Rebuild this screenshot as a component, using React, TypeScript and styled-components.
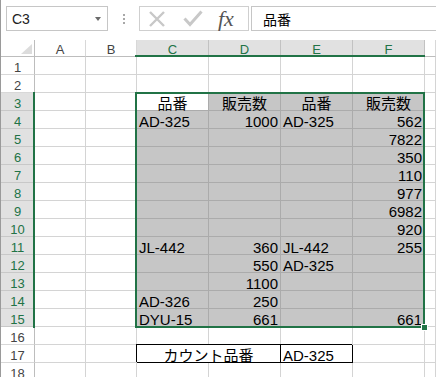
import React from 'react';
import styled, { createGlobalStyle } from 'styled-components';

const GlobalStyle = createGlobalStyle`
  html, body { margin: 0; padding: 0; background: #fff; }
  body { font-family: "Liberation Sans", "Noto Sans CJK JP", sans-serif; }
`;

const GREEN = '#217346';

const Window = styled.div`
  width: 436px;
  height: 377px;
  overflow: hidden;
  box-sizing: border-box;
  border-left: 1px solid #9a9a9a;
  background: #fff;
`;

const FormulaBar = styled.div`
  display: flex;
  align-items: flex-start;
  height: 40px;
  box-sizing: border-box;
  padding: 6px 0 0 5px;
`;

const NameBox = styled.div`
  width: 102px;
  height: 25px;
  box-sizing: border-box;
  border: 1px solid #c6c6c6;
  display: flex;
  align-items: center;
  justify-content: space-between;
  padding: 0 6px 0 5px;
  font-size: 14px;
  color: #222;
`;

const DropArrow = styled.span`
  width: 0;
  height: 0;
  border-left: 3.5px solid transparent;
  border-right: 3.5px solid transparent;
  border-top: 4px solid #6b6b6b;
`;

const Splitter = styled.div`
  width: 31px;
  height: 25px;
  display: flex;
  flex-direction: column;
  align-items: center;
  justify-content: center;
  gap: 2px;
`;

const Dot = styled.span`
  width: 2px;
  height: 2px;
  background: #a8a8a8;
`;

const ActionGroup = styled.div`
  width: 110px;
  height: 25px;
  box-sizing: border-box;
  border: 1px solid #cfcfcf;
  display: flex;
  align-items: center;
  padding-left: 8px;
`;

const IconSlot = styled.span<{ $ml: number }>`
  display: flex;
  margin-left: ${(p) => p.$ml}px;
`;

const Fx = styled.span`
  margin-left: 15px;
  font-family: "Liberation Serif", serif;
  font-style: italic;
  font-size: 22px;
  line-height: 1;
  color: #555;
  margin-top: 1px;
`;

const FormulaInput = styled.div`
  flex: 1;
  margin-left: 2px;
  height: 25px;
  box-sizing: border-box;
  border: 1px solid #c6c6c6;
  border-right: none;
  display: flex;
  align-items: center;
  padding-left: 11px;
  font-size: 14px;
  color: #000;
`;

const Sheet = styled.div`
  position: relative;
  display: grid;
  grid-template-columns: 34px 51px 51px 72px 72px 72px 72px 1fr;
  grid-template-rows: 17px repeat(18, 18px);
`;

const Corner = styled.div`
  box-sizing: border-box;
  border-right: 1px solid #bdbdbd;
  border-bottom: 1px solid #bdbdbd;
  position: relative;
  &::after {
    content: '';
    position: absolute;
    right: 2px;
    bottom: 2px;
    width: 0;
    height: 0;
    border-left: 11px solid transparent;
    border-bottom: 10px solid #dcdcdc;
  }
`;

const ColHeader = styled.div<{ $active?: boolean }>`
  box-sizing: border-box;
  border-right: 1px solid ${(p) => (p.$active ? '#c2c2c2' : '#d8d8d8')};
  border-bottom: 1px solid #bdbdbd;
  background: ${(p) => (p.$active ? '#e1e1e1' : '#fff')};
  color: ${(p) => (p.$active ? GREEN : '#444')};
  font-size: 13px;
  text-align: center;
  line-height: 13px;
  padding-top: 3px;
`;

const RowHeader = styled.div<{ $active?: boolean }>`
  box-sizing: border-box;
  border-right: 1px solid #bdbdbd;
  border-bottom: 1px solid ${(p) => (p.$active ? '#c8c8c8' : '#d8d8d8')};
  background: ${(p) => (p.$active ? '#e1e1e1' : '#fff')};
  color: ${(p) => (p.$active ? GREEN : '#444')};
  font-size: 13px;
  text-align: center;
  line-height: 13px;
  padding-top: 4px;
`;

const Cell = styled.div<{ $sel?: boolean; $white?: boolean; $align?: 'left' | 'right' | 'center'; $boxed?: boolean; $span?: number }>`
  box-sizing: border-box;
  grid-column: ${(p) => (p.$span ? `span ${p.$span}` : 'auto')};
  border-right: 1px solid ${(p) => (p.$boxed ? '#000' : p.$sel ? '#ababab' : '#d4d4d4')};
  border-bottom: 1px solid ${(p) => (p.$boxed ? '#000' : p.$sel ? '#ababab' : '#d4d4d4')};
  box-shadow: ${(p) => (p.$boxed ? '-1px -1px 0 0 #000' : 'none')};
  background: ${(p) => (p.$sel && !p.$white ? '#c6c6c6' : '#fff')};
  font-size: 15px;
  line-height: 13px;
  padding: 4px 2px 0 2px;
  text-align: ${(p) => p.$align || 'left'};
  color: #000;
  white-space: nowrap;
  overflow: visible;
`;

const SelectionFrame = styled.div`
  position: absolute;
  left: 134px;
  top: 52px;
  width: 290px;
  height: 236px;
  box-sizing: border-box;
  border: 2px solid ${GREEN};
  pointer-events: none;
`;

const ColMark = styled.div`
  position: absolute;
  left: 134px;
  top: 15px;
  width: 290px;
  height: 2px;
  background: ${GREEN};
`;

const RowMark = styled.div`
  position: absolute;
  left: 32px;
  top: 52px;
  width: 2px;
  height: 236px;
  background: ${GREEN};
`;

const FillHandle = styled.div`
  position: absolute;
  left: 420px;
  top: 284px;
  width: 7px;
  height: 7px;
  box-sizing: border-box;
  border: 1px solid #fff;
  background: ${GREEN};
`;

type Align = 'left' | 'right' | 'center';
type CellData = { v?: string; a?: Align };

const L = (v: string): CellData => ({ v, a: 'left' });
const R = (v: string): CellData => ({ v, a: 'right' });
const Cc = (v: string): CellData => ({ v, a: 'center' });
const E: CellData = {};

const tableRows: CellData[][] = [
  [Cc('品番'), Cc('販売数'), Cc('品番'), Cc('販売数')],
  [L('AD-325'), R('1000'), L('AD-325'), R('562')],
  [E, E, E, R('7822')],
  [E, E, E, R('350')],
  [E, E, E, R('110')],
  [E, E, E, R('977')],
  [E, E, E, R('6982')],
  [E, E, E, R('920')],
  [L('JL-442'), R('360'), L('JL-442'), R('255')],
  [E, R('550'), L('AD-325'), E],
  [E, R('1100'), E, E],
  [L('AD-326'), R('250'), E, E],
  [L('DYU-15'), R('661'), E, R('661')],
];

const cols = ['A', 'B', 'C', 'D', 'E', 'F', ''];

function XIcon() {
  return (
    <svg width="18" height="18" viewBox="0 0 18 18">
      <path d="M2 2 L16 16 M16 2 L2 16" stroke="#c8c8c8" strokeWidth="2.4" fill="none" />
    </svg>
  );
}

function CheckIcon() {
  return (
    <svg width="20" height="17" viewBox="0 0 20 17">
      <path d="M1.5 8.5 L7 14.5 L18.5 1.5" stroke="#c8c8c8" strokeWidth="3" fill="none" />
    </svg>
  );
}

function renderRow(r: number) {
  const active = r >= 3 && r <= 15;
  const cells: React.ReactNode[] = [];
  cells.push(<Cell key="a" />, <Cell key="b" />);
  if (active) {
    const data = tableRows[r - 3];
    data.forEach((d, i) => {
      cells.push(
        <Cell key={i} $sel $white={r === 3 && i === 0} $align={d.a}>
          {d.v}
        </Cell>
      );
    });
  } else if (r === 17) {
    cells.push(
      <Cell key="cd" $span={2} $boxed $align="center">
        カウント品番
      </Cell>,
      <Cell key="e" $boxed>
        AD-325
      </Cell>,
      <Cell key="f" />
    );
  } else {
    cells.push(<Cell key="c" />, <Cell key="d" />, <Cell key="e" />, <Cell key="f" />);
  }
  cells.push(<Cell key="g" />);
  return (
    <React.Fragment key={r}>
      <RowHeader $active={active}>{r}</RowHeader>
      {cells}
    </React.Fragment>
  );
}

export default function App() {
  const rows = Array.from({ length: 18 }, (_, i) => i + 1);
  return (
    <>
      <GlobalStyle />
      <Window>
        <FormulaBar>
          <NameBox>
            <span>C3</span>
            <DropArrow />
          </NameBox>
          <Splitter>
            <Dot />
            <Dot />
            <Dot />
          </Splitter>
          <ActionGroup>
            <IconSlot $ml={0}>
              <XIcon />
            </IconSlot>
            <IconSlot $ml={17}>
              <CheckIcon />
            </IconSlot>
            <Fx>fx</Fx>
          </ActionGroup>
          <FormulaInput>品番</FormulaInput>
        </FormulaBar>
        <Sheet>
          <Corner />
          {cols.map((c, i) => (
            <ColHeader key={i} $active={i >= 2 && i <= 5}>
              {c}
            </ColHeader>
          ))}
          {rows.map(renderRow)}
          <ColMark />
          <RowMark />
          <SelectionFrame />
          <FillHandle />
        </Sheet>
      </Window>
    </>
  );
}
